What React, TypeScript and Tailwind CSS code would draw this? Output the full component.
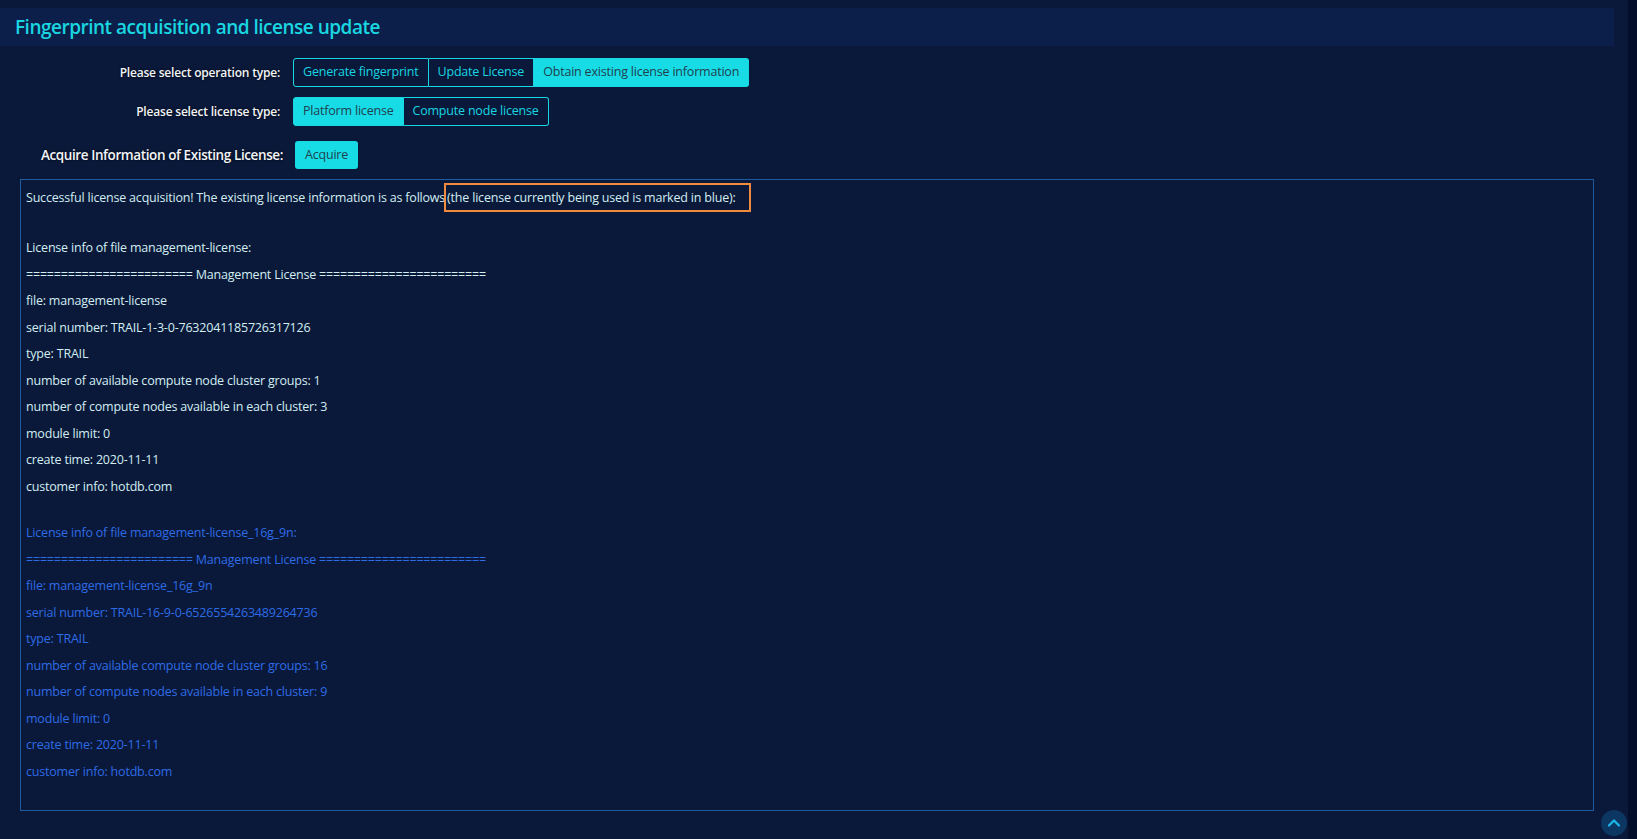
import React from 'react';

const FONT = { fontFamily: '"Open Sans", "Noto Sans", sans-serif' };

const whiteLines = [
  'License info of file management-license:',
  '======================== Management License ========================',
  'file: management-license',
  'serial number: TRAIL-1-3-0-7632041185726317126',
  'type: TRAIL',
  'number of available compute node cluster groups: 1',
  'number of compute nodes available in each cluster: 3',
  'module limit: 0',
  'create time: 2020-11-11',
  'customer info: hotdb.com',
];

const blueLines = [
  'License info of file management-license_16g_9n:',
  '======================== Management License ========================',
  'file: management-license_16g_9n',
  'serial number: TRAIL-16-9-0-6526554263489264736',
  'type: TRAIL',
  'number of available compute node cluster groups: 16',
  'number of compute nodes available in each cluster: 9',
  'module limit: 0',
  'create time: 2020-11-11',
  'customer info: hotdb.com',
];

function SegButton({ label, active, first, last }: { label: string; active?: boolean; first?: boolean; last?: boolean }) {
  return (
    <div
      className={`h-full flex items-center px-[9px] text-[12.5px] tracking-[-0.2px] border-[#17d8e4] ${
        first ? 'border rounded-l-[3px]' : 'border-y border-r'
      } ${last ? 'rounded-r-[3px]' : ''} ${active ? 'bg-[#17dce6] text-[#21404f]' : 'text-[#17d6e2]'}`}
    >
      {label}
    </div>
  );
}

function Row({ label, children, top }: { label: string; children: React.ReactNode; top: string }) {
  return (
    <div className={`flex items-center h-[29px] ${top}`}>
      <div className="w-[280px] text-right text-[12px] tracking-[-0.2px] font-semibold text-[#f2f5f9] [text-shadow:0_0_2px_rgba(0,0,0,0.9)]">
        {label}
      </div>
      <div className="ml-[13px] h-full flex">{children}</div>
    </div>
  );
}

export default function App() {
  return (
    <div className="w-full h-[839px] bg-[#0a1839] flex overflow-hidden" style={FONT}>
      <div className="flex-1 relative pt-[8px]">
        {/* header */}
        <div className="h-[38px] mr-[14px] bg-[#0c1f4a] flex items-center pl-[15px]">
          <h1 className="text-[19px] font-semibold text-[#1ad6e0] tracking-[-0.5px]">
            Fingerprint acquisition and license update
          </h1>
        </div>

        <Row label="Please select operation type:" top="mt-[12px]">
          <SegButton label="Generate fingerprint" first />
          <SegButton label="Update License" />
          <SegButton label="Obtain existing license information" active last />
        </Row>

        <Row label="Please select license type:" top="mt-[10px]">
          <SegButton label="Platform license" active first />
          <SegButton label="Compute node license" last />
        </Row>

        <div className="flex items-center h-[28px] mt-[15px]">
          <div className="w-[283px] text-right text-[13.5px] tracking-[-0.4px] font-semibold text-[#f2f5f9] [text-shadow:0_0_2px_rgba(0,0,0,0.9)]">
            Acquire Information of Existing License:
          </div>
          <button className="ml-[12px] h-full px-[10px] rounded-[3px] bg-[#17dce6] text-[#21404f] text-[12.5px] tracking-[-0.2px]">
            Acquire
          </button>
        </div>

        {/* result box */}
        <div className="mt-[10px] ml-[20px] mr-[34px] h-[632px] border border-[#1f5c9f] pl-[5px] pt-[5px] text-[12.5px] tracking-[-0.2px] leading-[26.45px]">
          <div className="text-[#d2eef2]">
            Successful license acquisition! The existing license information is as follows
            <span className="outline-2 outline-[#f08a3c] -outline-offset-1 pl-[2px] py-[5px] pr-[14px]">
              (the license currently being used is marked in blue):
            </span>
          </div>
          <div className="h-[24px]" />
          {whiteLines.map((l, i) => (
            <div key={i} className="text-[#d2eef2] whitespace-pre">{l}</div>
          ))}
          <div className="h-[20.5px]" />
          {blueLines.map((l, i) => (
            <div key={i} className="text-[#2e6ce6] whitespace-pre">{l}</div>
          ))}
        </div>

        {/* scroll to top */}
        <div className="absolute right-[1px] bottom-[3px] w-[26px] h-[26px] rounded-full bg-[#0b3762] flex items-center justify-center">
          <svg width="14" height="14" viewBox="0 0 14 14" fill="none">
            <path d="M2 9.5 L7 4.5 L12 9.5" stroke="#1bb6ea" strokeWidth="2.2" strokeLinecap="round" strokeLinejoin="round" />
          </svg>
        </div>
      </div>
      <div className="w-[9px] bg-[#030f2a]" />
    </div>
  );
}
